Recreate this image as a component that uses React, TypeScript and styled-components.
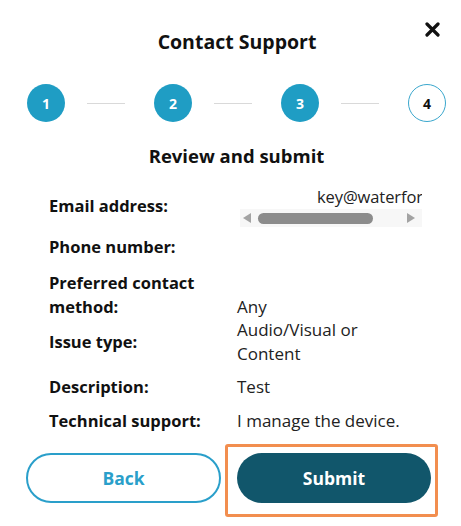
import React from "react";
import styled, { createGlobalStyle } from "styled-components";

const GlobalStyle = createGlobalStyle`
  html, body { margin: 0; padding: 0; background: #ffffff; }
  body { font-family: "Open Sans", "Noto Sans", sans-serif; color: #111111; }
  * { box-sizing: border-box; }
`;

const Dialog = styled.div`
  width: 461px;
  height: 526px;
  padding-top: 22px;
  display: flex;
  flex-direction: column;
  background: #ffffff;
`;

const Header = styled.div`
  display: flex;
  align-items: flex-start;
  padding: 0 21px 0 49px;
`;

const Title = styled.h1`
  flex: 1;
  margin: 7.5px 0 0;
  font-size: 19.5px;
  line-height: 24px;
  font-weight: 700;
  text-align: center;
  color: #111111;
`;

const CloseButton = styled.button`
  width: 15px;
  height: 15px;
  padding: 0;
  border: none;
  background: none;
  display: flex;
  cursor: pointer;
`;

const Steps = styled.div`
  display: flex;
  align-items: center;
  padding-left: 27px;
  margin-top: 30.5px;
`;

const StepCircle = styled.div<{ $done?: boolean }>`
  width: 38px;
  height: 38px;
  flex: none;
  border-radius: 50%;
  display: flex;
  align-items: center;
  justify-content: center;
  font-size: 14px;
  font-weight: 700;
  background: ${(p) => (p.$done ? "#1f9dc4" : "#ffffff")};
  color: ${(p) => (p.$done ? "#ffffff" : "#111111")};
  border: ${(p) => (p.$done ? "none" : "1.5px solid #3aa7cd")};
`;

const Connector = styled.div`
  width: 38px;
  flex: none;
  height: 1px;
  background: #d9d9d9;
  margin: 0 29px 0 22px;
`;

const SectionTitle = styled.h2`
  margin: 23px 0 0;
  padding-left: 12px;
  font-size: 18.5px;
  line-height: 22px;
  font-weight: 700;
  text-align: center;
  color: #111111;
`;

const Details = styled.div`
  display: flex;
  flex-direction: column;
  padding-left: 49px;
  margin-top: 18px;
`;

const Row = styled.div<{ $top: number; $align?: string }>`
  display: grid;
  grid-template-columns: 188px 185px;
  align-items: ${(p) => p.$align || "center"};
  margin-top: ${(p) => p.$top}px;
`;

const Label = styled.div`
  font-size: 16.5px;
  line-height: 24px;
  font-weight: 700;
  color: #111111;
`;

const Value = styled.div`
  font-size: 17px;
  line-height: 24px;
  font-weight: 400;
  color: #222222;
  min-height: 24px;
`;

const ScrollBox = styled.div`
  display: flex;
  flex-direction: column;
`;

const ScrollText = styled.div`
  overflow: hidden;
  white-space: nowrap;
  padding-left: 80px;
  font-size: 16.5px;
  letter-spacing: -0.1px;
  line-height: 24px;
  color: #222222;
`;

const ScrollTrack = styled.div`
  height: 18px;
  width: 182px;
  margin-left: 3px;
  background: #f7f7f7;
  display: flex;
  align-items: center;
  padding: 0 7px 0 3px;
`;

const Arrow = styled.div<{ $dir: "left" | "right" }>`
  width: 0;
  height: 0;
  border-top: 5px solid transparent;
  border-bottom: 5px solid transparent;
  ${(p) =>
    p.$dir === "left"
      ? "border-right: 8px solid #a3a3a3;"
      : "border-left: 8px solid #a3a3a3;"}
`;

const Thumb = styled.div`
  width: 115px;
  height: 11px;
  border-radius: 6px;
  background: #8c8c8c;
  margin: 0 auto 0 7px;
`;

const Actions = styled.div`
  display: flex;
  align-items: flex-start;
  padding-left: 26px;
  margin-top: 11px;
`;

const BackButton = styled.button`
  width: 195px;
  height: 50px;
  margin-top: 9px;
  border-radius: 25px;
  border: 2px solid #2a9fca;
  background: #ffffff;
  color: #2a9fca;
  font-family: "Open Sans", "Noto Sans", sans-serif;
  font-size: 17.5px;
  font-weight: 700;
  cursor: pointer;
`;

const FocusRing = styled.div`
  margin-left: 4px;
  padding: 6px 4px 11px 9px;
  border: 3px solid #f28e4f;
  border-radius: 3px;
`;

const SubmitButton = styled.button`
  width: 194px;
  height: 50px;
  border-radius: 25px;
  border: none;
  background: #11566b;
  color: #ffffff;
  font-family: "Open Sans", "Noto Sans", sans-serif;
  font-size: 17.5px;
  font-weight: 700;
  cursor: pointer;
  display: block;
`;

export default function App() {
  const steps = [1, 2, 3, 4];
  return (
    <>
      <GlobalStyle />
      <Dialog>
        <Header>
          <Title>Contact Support</Title>
          <CloseButton aria-label="Close">
            <svg width="15" height="15" viewBox="0 0 15 15">
              <path d="M2 2 L13 13 M13 2 L2 13" stroke="#111" strokeWidth="3.2" strokeLinecap="round" />
            </svg>
          </CloseButton>
        </Header>
        <Steps>
          {steps.map((s, i) => (
            <React.Fragment key={s}>
              <StepCircle $done={s < 4}>{s}</StepCircle>
              {i < steps.length - 1 && <Connector />}
            </React.Fragment>
          ))}
        </Steps>
        <SectionTitle>Review and submit</SectionTitle>
        <Details>
          <Row $top={0}>
            <Label>Email address:</Label>
            <ScrollBox>
              <ScrollText>key@waterford.org</ScrollText>
              <ScrollTrack>
                <Arrow $dir="left" />
                <Thumb />
                <Arrow $dir="right" />
              </ScrollTrack>
            </ScrollBox>
          </Row>
          <Row $top={8}>
            <Label>Phone number:</Label>
            <Value></Value>
          </Row>
          <Row $top={12} $align="end">
            <Label>
              Preferred contact
              <br />
              method:
            </Label>
            <Value>Any</Value>
          </Row>
          <Row $top={-1}>
            <Label>Issue type:</Label>
            <Value>
              Audio/Visual or
              <br />
              Content
            </Value>
          </Row>
          <Row $top={9}>
            <Label>Description:</Label>
            <Value>Test</Value>
          </Row>
          <Row $top={10}>
            <Label>Technical support:</Label>
            <Value>I manage the device.</Value>
          </Row>
        </Details>
        <Actions>
          <BackButton>Back</BackButton>
          <FocusRing>
            <SubmitButton>Submit</SubmitButton>
          </FocusRing>
        </Actions>
      </Dialog>
    </>
  );
}
